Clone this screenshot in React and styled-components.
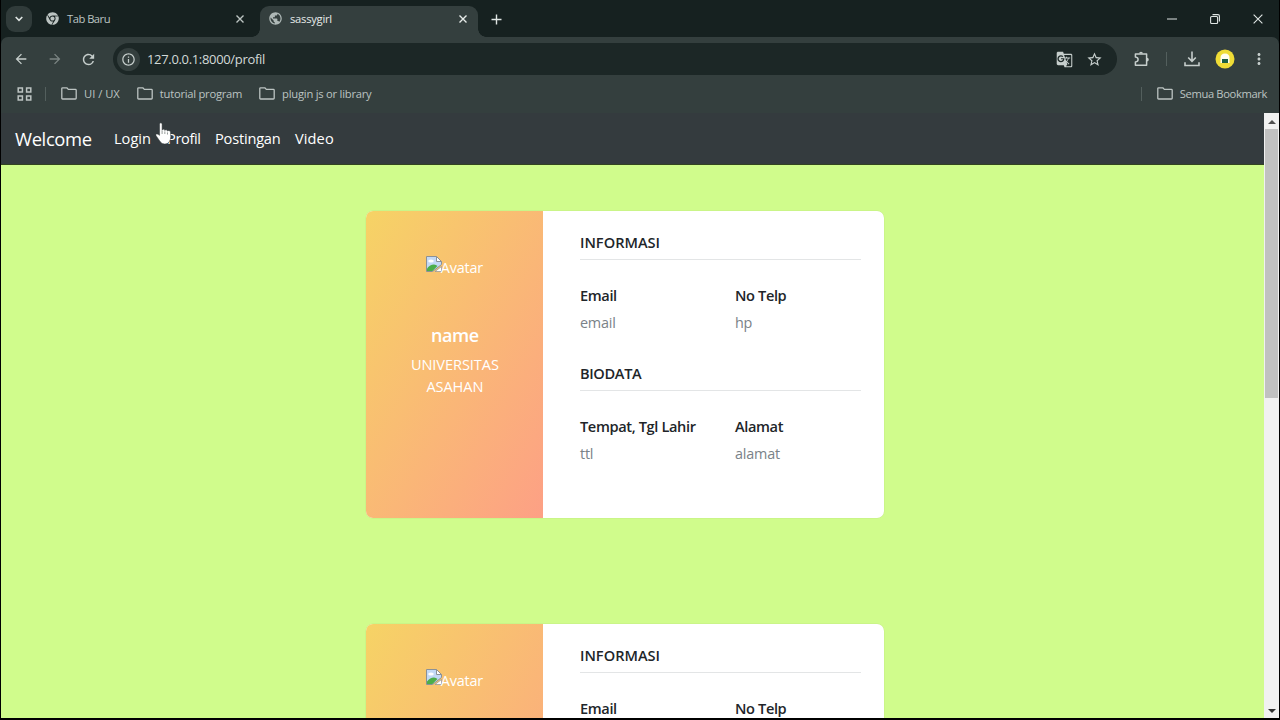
import React from 'react';
import styled, { createGlobalStyle } from 'styled-components';
import { FaChrome } from 'react-icons/fa';
import {
  MdArrowBack,
  MdArrowForward,
  MdRefresh,
  MdInfoOutline,
  MdPublic,
  MdStarOutline,
  MdMoreVert,
  MdGTranslate,
} from 'react-icons/md';

const GlobalStyle = createGlobalStyle`
  * {
    box-sizing: border-box;
  }

  body {
    margin: 0;
    background: #000;
    font-family: "Open Sans", "Noto Sans", sans-serif;
  }

  svg {
    display: block;
    flex: none;
  }
`;

const Window = styled.div`
  position: relative;
  width: 1280px;
  height: 720px;
  padding: 0 1px 2px;
  display: flex;
  flex-direction: column;
  overflow: hidden;
  background: #000;
`;

const TabStrip = styled.div`
  display: flex;
  height: 37px;
  padding: 6px 0 0 5px;
  background: #162120;
  color: #dfe5e3;
`;

const TabSearch = styled.div`
  display: flex;
  align-items: center;
  justify-content: center;
  width: 26px;
  height: 26px;
  margin-right: 11px;
  border-radius: 9px;
  background: #303b3a;
`;

const Tab = styled.div`
  position: relative;
  display: flex;
  align-items: center;
  width: ${(p) => p.$width}px;
  height: 31px;
  padding: 0 ${(p) => (p.$active ? 11 : 16)}px 6px ${(p) => (p.$active ? 8 : 3)}px;
  border-radius: 9px 9px 0 0;
  background: ${(p) => (p.$active ? '#343f3e' : 'transparent')};
  color: ${(p) => (p.$active ? '#e6ebe9' : '#bcc4c2')};
  font-size: 11.2px;
  letter-spacing: ${(p) => (p.$active ? '-0.25px' : '-0.5px')};

  span {
    flex: 1;
    margin-left: ${(p) => (p.$active ? 7 : 8)}px;
  }

  &::before,
  &::after {
    content: '';
    display: ${(p) => (p.$active ? 'block' : 'none')};
    position: absolute;
    bottom: 0;
    width: 8px;
    height: 8px;
  }

  &::before {
    left: -8px;
    background: radial-gradient(circle at 0 0, transparent 7.5px, #343f3e 8px);
  }

  &::after {
    right: -8px;
    background: radial-gradient(circle at 100% 0, transparent 7.5px, #343f3e 8px);
  }
`;

const NewTab = styled.div`
  display: flex;
  align-items: center;
  height: 26px;
  margin-left: 13px;
`;

const WindowButtons = styled.div`
  display: flex;
  align-items: center;
  gap: 33px;
  height: 25px;
  margin-left: auto;
  padding-right: 16px;
`;

const ToolbarBack = styled.div`
  background: #162120;
`;

const Toolbar = styled.div`
  display: flex;
  align-items: center;
  height: 43px;
  padding: 1px 11px 0 12px;
  border-radius: 7px 7px 0 0;
  background: #343f3e;
  color: #c6cecc;
`;

const NavButton = styled.div`
  width: 16px;
  margin-right: ${(p) => p.$gap}px;
  color: ${(p) => (p.$dim ? '#7b8583' : '#c6cecc')};
`;

const AddressBar = styled.div`
  display: flex;
  align-items: center;
  width: 1004px;
  height: 32px;
  padding: 0 14px 0 4px;
  border-radius: 16px;
  background: #1c2726;
`;

const SiteInfo = styled.div`
  display: flex;
  align-items: center;
  justify-content: center;
  width: 23px;
  height: 23px;
  border-radius: 50%;
  background: #343f3e;
`;

const Url = styled.span`
  flex: 1;
  margin-left: 7px;
  font-size: 13px;
  letter-spacing: -0.33px;
  color: #d3dad8;
`;

const AddressActions = styled.div`
  display: flex;
  align-items: center;
  gap: 13px;
`;

const ToolbarEnd = styled.div`
  display: flex;
  align-items: center;
  margin-left: auto;
`;

const Separator = styled.div`
  width: 1px;
  height: 14px;
  margin: 0 ${(p) => p.$after}px 0 ${(p) => p.$before}px;
  background: #535f5d;
`;

const Profile = styled.div`
  display: flex;
  margin: 0 15px 0 15px;
`;

const BookmarkBar = styled.div`
  display: flex;
  align-items: center;
  height: 33px;
  padding: 0 12px 6px 16px;
  background: #343f3e;
  color: #bcc4c2;
  font-size: 11.2px;
`;

const Bookmark = styled.div`
  display: flex;
  align-items: center;
  gap: 7px;
  margin-right: ${(p) => p.$gap || 0}px;
  letter-spacing: ${(p) => p.$spacing || 0}px;
  white-space: nowrap;
`;

const Viewport = styled.div`
  display: flex;
  flex: 1;
  min-height: 0;
`;

const Page = styled.main`
  flex: 1;
  overflow: hidden;
  background: #d0fc8c;
`;

const Navbar = styled.nav`
  display: flex;
  align-items: center;
  height: 52px;
  padding: 0 14px;
  border-bottom: 1px solid #33451f;
  background: #343b3e;
  color: #fff;
`;

const Brand = styled.div`
  width: 99px;
  font-size: 18.4px;
  letter-spacing: -0.35px;
`;

const NavLink = styled.a`
  width: ${(p) => p.$width}px;
  padding-bottom: 1px;
  font-size: 14.6px;
  letter-spacing: ${(p) => p.$spacing}px;
  white-space: nowrap;
`;

const CardList = styled.div`
  display: flex;
  flex-direction: column;
  align-items: flex-start;
  gap: 106.5px;
  padding: 45.6px 0 0 365.4px;
`;

const Card = styled.section`
  display: flex;
  width: 518px;
  height: 307px;
  flex: none;
  border-radius: 7px;
  background: #fff;
  box-shadow: 0 0 0 0.5px rgba(0, 0, 0, 0.06);
  overflow: hidden;
`;

const Side = styled.div`
  width: 177px;
  padding-top: 45px;
  background: linear-gradient(to right bottom, #f6d365, #fda085);
  color: #fff;
  text-align: center;
`;

const Avatar = styled.div`
  display: flex;
  justify-content: center;
  height: 68.4px;
  padding-right: 1px;
  font-size: 14.4px;
  line-height: 24px;
  letter-spacing: -0.2px;

  span {
    margin-left: -1px;
  }
`;

const Name = styled.h5`
  margin: 0 0 7px;
  font-size: 18px;
  font-weight: 600;
  line-height: 22px;
  letter-spacing: -0.4px;
`;

const Campus = styled.p`
  margin: 0 auto;
  width: 120px;
  font-size: 14.6px;
  line-height: 22.5px;
  letter-spacing: -0.08px;
`;

const Details = styled.div`
  flex: 1;
  padding: 21px 23px 0 36.6px;
  color: #212529;
`;

const SectionTitle = styled.h6`
  margin: 0;
  font-size: 14.6px;
  font-weight: 600;
  line-height: 20px;
  letter-spacing: ${(p) => p.$spacing}px;
`;

const Rule = styled.hr`
  height: 1px;
  margin: 7px 0 25px;
  border: 0;
  background: #e3e5e6;
`;

const Fields = styled.div`
  display: grid;
  grid-template-columns: 155px 1fr;
  height: 78px;
`;

const Label = styled.h6`
  margin: 0 0 8px;
  font-size: 14.6px;
  font-weight: 600;
  line-height: 20px;
  letter-spacing: -0.37px;
  white-space: nowrap;
`;

const Value = styled.p`
  margin: 0;
  font-size: 14.4px;
  line-height: 20px;
  letter-spacing: -0.2px;
  color: #7a8288;
`;

const Scrollbar = styled.div`
  display: flex;
  flex-direction: column;
  align-items: center;
  width: 15px;
  padding: 7px 0 5px;
  background: #f1f1f1;
`;

const Thumb = styled.div`
  width: 13px;
  height: 269px;
  margin: 5px 0 auto;
  background: #c1c1c1;
`;

const Pointer = styled.div`
  position: absolute;
  left: 155px;
  top: 122px;
`;

const CloseIcon = ({ size = 8, width = 1.4 }) => (
  <svg width={size} height={size} viewBox="0 0 8 8" stroke="currentColor" strokeWidth={width}>
    <path d="M.5.5l7 7M7.5.5l-7 7" />
  </svg>
);

const FolderIcon = () => (
  <svg width="16" height="13" viewBox="0 0 16 13" fill="none" stroke="currentColor" strokeWidth="1.3" strokeLinejoin="round">
    <path d="M1.6.8h4.2l1.5 1.6h7.1q.8 0 .8.8v8q0 .8-.8.8H1.6q-.8 0-.8-.8V1.6q0-.8.8-.8z" />
  </svg>
);

const AppsIcon = () => (
  <svg width="15" height="14" viewBox="0 0 15 14" fill="none" stroke="currentColor" strokeWidth="1.5">
    <path d="M1.2.9h4.2v4.2H1.2zM9.6.9h4.2v4.2H9.6zM1.2 8.9h4.2v4.2H1.2zM9.6 8.9h4.2v4.2H9.6z" />
  </svg>
);

const ExtensionIcon = () => (
  <svg width="16" height="16" viewBox="0 0 16 16">
    <path
      d="M1.4 2.9h11.2v11.300H1.400v-3.200q2.700-.3 2.700-2.400T1.400 6.100z"
      fill="none"
      stroke="currentColor"
      strokeWidth="1.500"
      strokeLinejoin="round"
    />
    <path d="M5.100 2.600a1.900 1.900 0 0 1 3.800 0zM12.900 6.700a1.900 1.900 0 0 1 0 3.800z" fill="currentColor" />
  </svg>
);

const DownloadIcon = () => (
  <svg width="16" height="16" viewBox="0 0 16 16" fill="none" stroke="currentColor" strokeWidth="1.6">
    <path d="M8 .5v9.500M4.200 6.500L8 10.300l3.800-3.800M1 11.300v3.200h14v-3.200" />
  </svg>
);

const BrokenImage = () => (
  <svg width="16" height="16" viewBox="0 0 16 16">
    <path d="M.5.5h10l5 5v3l-9 7h-6z" fill="#c3d9f5" stroke="#8b9197" />
    <path d="M10.5.5v5h5z" fill="#fff" stroke="#8b9197" />
    <ellipse cx="5" cy="5" rx="2.8" ry="1.6" fill="#fff" />
    <path d="M1 15v-2.500q3-4 7-4 2 0 3.500 1.500L6.500 15z" fill="#4cae49" />
    <path d="M9 15.5l6.5-5v5z" fill="#fff" stroke="#8b9197" strokeWidth=".7" />
  </svg>
);

const HandIcon = () => (
  <svg width="18" height="24" viewBox="0 0 17 23" preserveAspectRatio="none">
    <path
      d="M4.3 2.2Q4.3.7 5.5.7t1.2 1.500v5.500q.3-.8 1.300-.8 1.200 0 1.300 1.200.3-.7 1.200-.7 1.200 0 1.300 1.300.3-.6 1.300-.6 1.500 0 1.500 1.600l.3 4.500q0 2.500-1.600 5-1.500 2-4 2-3 0-4.500-2.500L1 13.100q-.6-1.200.4-1.600 1-.3 2.900 1.300z"
      fill="#fff"
      stroke="#30383a"
      strokeWidth=".5"
    />
    <path d="M6.7 8v3.500M9.300 9v2.500M11.800 10v2" stroke="#59615f" strokeWidth=".6" />
  </svg>
);

const people = [
  { id: 1, name: 'name', email: 'email', phone: 'hp', birth: 'ttl', address: 'alamat' },
  { id: 2, name: 'name', email: 'email', phone: 'hp', birth: 'ttl', address: 'alamat' },
];

const Field = ({ label, value }) => (
  <div>
    <Label>{label}</Label>
    <Value>{value}</Value>
  </div>
);

const ProfileCard = ({ person }) => (
  <Card>
    <Side>
      <Avatar>
        <BrokenImage />
        <span>Avatar</span>
      </Avatar>
      <Name>{person.name}</Name>
      <Campus>UNIVERSITAS ASAHAN</Campus>
    </Side>
    <Details>
      <SectionTitle $spacing={0}>INFORMASI</SectionTitle>
      <Rule />
      <Fields>
        <Field label="Email" value={person.email} />
        <Field label="No Telp" value={person.phone} />
      </Fields>
      <SectionTitle $spacing={-0.35}>BIODATA</SectionTitle>
      <Rule />
      <Fields>
        <Field label="Tempat, Tgl Lahir" value={person.birth} />
        <Field label="Alamat" value={person.address} />
      </Fields>
    </Details>
  </Card>
);

const Browser = () => (
  <>
    <TabStrip>
      <TabSearch>
        <svg width="8" height="6" viewBox="0 0 8 6" fill="none" stroke="currentColor" strokeWidth="1.6">
          <path d="M.7 1L4 4.3 7.3 1" />
        </svg>
      </TabSearch>
      <Tab $width={217}>
        <FaChrome size={13} />
        <span>Tab Baru</span>
        <CloseIcon />
      </Tab>
      <Tab $active $width={218}>
        <MdPublic size={15} color="#aeb8b6" />
        <span>sassygirl</span>
        <CloseIcon />
      </Tab>
      <NewTab>
        <svg width="11" height="11" viewBox="0 0 11 11" stroke="currentColor" strokeWidth="1.4">
          <path d="M5.5.5v10M.5 5.5h10" />
        </svg>
      </NewTab>
      <WindowButtons>
        <svg width="10" height="2" viewBox="0 0 10 2">
          <path d="M0 1h10" stroke="currentColor" />
        </svg>
        <svg width="10" height="10" viewBox="0 0 10 10" fill="none" stroke="currentColor" strokeWidth="1.1">
          <rect x=".6" y="2.5" width="7" height="7" rx="1" />
          <path d="M2.5.6H8q1.4 0 1.4 1.4v5.5" />
        </svg>
        <CloseIcon size={10} width={0.9} />
      </WindowButtons>
    </TabStrip>

    <ToolbarBack>
      <Toolbar>
        <NavButton $gap={18}>
          <MdArrowBack size={16} />
        </NavButton>
        <NavButton $dim $gap={17}>
          <MdArrowForward size={16} />
        </NavButton>
        <NavButton $gap={17}>
          <MdRefresh size={17} />
        </NavButton>
        <AddressBar>
          <SiteInfo>
            <MdInfoOutline size={15} />
          </SiteInfo>
          <Url>127.0.0.1:8000/profil</Url>
          <AddressActions>
            <MdGTranslate size={17} />
            <MdStarOutline size={17} />
          </AddressActions>
        </AddressBar>
        <ToolbarEnd>
          <ExtensionIcon />
          <Separator $before={16} $after={17} />
          <DownloadIcon />
          <Profile>
            <svg width="20" height="20" viewBox="0 0 20 20">
              <circle cx="10" cy="10" r="9.5" fill="#efdc36" />
              <path d="M5.5 14V9q0-4.5 4.5-4.5T14.5 9v5z" fill="#fffdf0" />
              <path d="M7 10h6v4H7z" fill="#1d6045" />
            </svg>
          </Profile>
          <MdMoreVert size={18} />
        </ToolbarEnd>
      </Toolbar>
    </ToolbarBack>

    <BookmarkBar>
      <AppsIcon />
      <Separator $before={13} $after={15} />
      <Bookmark $gap={17}>
        <FolderIcon />
        UI / UX
      </Bookmark>
      <Bookmark $gap={17} $spacing={-0.25}>
        <FolderIcon />
        tutorial program
      </Bookmark>
      <Bookmark $spacing={-0.23}>
        <FolderIcon />
        plugin js or library
      </Bookmark>
      <ToolbarEnd>
        <Separator $before={0} $after={15} />
        <Bookmark $spacing={-0.37}>
          <FolderIcon />
          Semua Bookmark
        </Bookmark>
      </ToolbarEnd>
    </BookmarkBar>
  </>
);

const App = () => {
  return (
    <>
      <GlobalStyle />
      <Window>
        <Browser />
        <Viewport>
          <Page>
            <Navbar>
              <Brand>Welcome</Brand>
              <NavLink $width={53} $spacing={0}>Login</NavLink>
              <NavLink $width={48} $spacing={-0.35}>Profil</NavLink>
              <NavLink $width={80} $spacing={-0.2}>Postingan</NavLink>
              <NavLink $width={50} $spacing={0.1}>Video</NavLink>
            </Navbar>
            <CardList>
              {people.map((person) => (
                <ProfileCard key={person.id} person={person} />
              ))}
            </CardList>
          </Page>
          <Scrollbar>
            <svg width="8" height="4" viewBox="0 0 8 4">
              <path d="M0 4l4-4 4 4z" fill="#505050" />
            </svg>
            <Thumb />
            <svg width="8" height="4" viewBox="0 0 8 4">
              <path d="M0 0l4 4 4-4z" fill="#303030" />
            </svg>
          </Scrollbar>
        </Viewport>
        <Pointer>
          <HandIcon />
        </Pointer>
      </Window>
    </>
  );
};

export default App;
